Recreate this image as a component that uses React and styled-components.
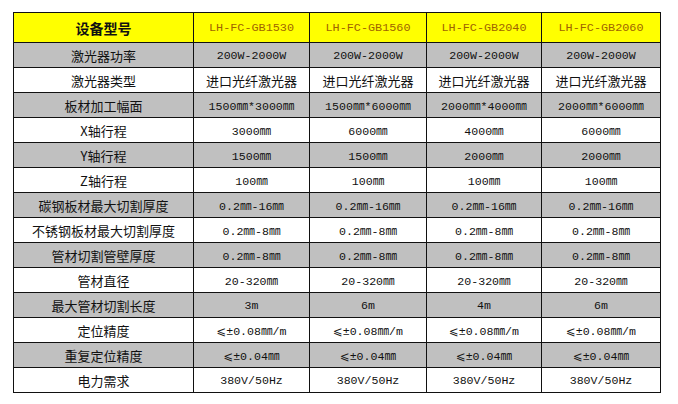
import styled, { createGlobalStyle } from 'styled-components';

const GlobalStyle = createGlobalStyle`
  html, body {
    margin: 0;
    padding: 0;
    background: #ffffff;
  }
`;

const Page = styled.div`
  padding: 12px 0 0 13px;
`;

const Grid = styled.div`
  display: inline-grid;
  grid-template-columns: 179px 115px 116px 114px 118px;
  grid-template-rows: 29px repeat(14, 24px);
  gap: 1px;
  padding: 1px;
  background: #111;
  color: #111;
`;

const HeadCell = styled.div`
  display: flex;
  align-items: center;
  justify-content: center;
  background: #ffff00;
  font-family: 'Noto Sans CJK SC', sans-serif;
  font-weight: bold;
  font-size: 14px;
`;

const ModelCell = styled(HeadCell)`
  font-family: 'Liberation Mono', monospace;
  font-weight: normal;
  font-size: 11.8px;
  color: #a06400;
`;

const Cell = styled.div`
  display: flex;
  align-items: center;
  justify-content: center;
  white-space: nowrap;
  background: ${({ $gray }) => ($gray ? '#c0c0c0' : '#ffffff')};
  font-family: ${({ $cjk }) =>
    $cjk ? "'Noto Sans CJK SC', sans-serif" : "'Liberation Mono', 'DejaVu Sans', 'Noto Sans CJK SC', monospace"};
  font-size: ${({ $cjk }) => ($cjk ? '13px' : '11.6px')};
`;

const models = ['LH-FC-GB1530', 'LH-FC-GB1560', 'LH-FC-GB2040', 'LH-FC-GB2060'];

const specs = [
  ['激光器功率', ['200W-2000W', '200W-2000W', '200W-2000W', '200W-2000W']],
  ['激光器类型', ['进口光纤激光器', '进口光纤激光器', '进口光纤激光器', '进口光纤激光器']],
  ['板材加工幅面', ['1500㎜*3000㎜', '1500㎜*6000㎜', '2000㎜*4000㎜', '2000㎜*6000㎜']],
  ['X轴行程', ['3000㎜', '6000㎜', '4000㎜', '6000㎜']],
  ['Y轴行程', ['1500㎜', '1500㎜', '2000㎜', '2000㎜']],
  ['Z轴行程', ['100㎜', '100㎜', '100㎜', '100㎜']],
  ['碳钢板材最大切割厚度', ['0.2㎜-16㎜', '0.2㎜-16㎜', '0.2㎜-16㎜', '0.2㎜-16㎜']],
  ['不锈钢板材最大切割厚度', ['0.2㎜-8㎜', '0.2㎜-8㎜', '0.2㎜-8㎜', '0.2㎜-8㎜']],
  ['管材切割管壁厚度', ['0.2㎜-8㎜', '0.2㎜-8㎜', '0.2㎜-8㎜', '0.2㎜-8㎜']],
  ['管材直径', ['20-320㎜', '20-320㎜', '20-320㎜', '20-320㎜']],
  ['最大管材切割长度', ['3m', '6m', '4m', '6m']],
  ['定位精度', ['⩽±0.08㎜/m', '⩽±0.08㎜/m', '⩽±0.08㎜/m', '⩽±0.08㎜/m']],
  ['重复定位精度', ['⩽±0.04㎜', '⩽±0.04㎜', '⩽±0.04㎜', '⩽±0.04㎜']],
  ['电力需求', ['380V/50Hz', '380V/50Hz', '380V/50Hz', '380V/50Hz']],
];

const hasCjk = (text) => /[\u4e00-\u9fff]/.test(text);

const App = () => {
  return (
    <>
      <GlobalStyle />
      <Page>
        <Grid>
          <HeadCell>设备型号</HeadCell>
          {models.map((m) => (
            <ModelCell key={m}>{m}</ModelCell>
          ))}
          {specs.map(([label, values], i) => (
            <>
              <Cell key={label} $gray={i % 2 === 0} $cjk>
                {label}
              </Cell>
              {values.map((v, j) => (
                <Cell key={label + j} $gray={i % 2 === 0} $cjk={hasCjk(v)}>
                  {v}
                </Cell>
              ))}
            </>
          ))}
        </Grid>
      </Page>
    </>
  );
};

export default App;
